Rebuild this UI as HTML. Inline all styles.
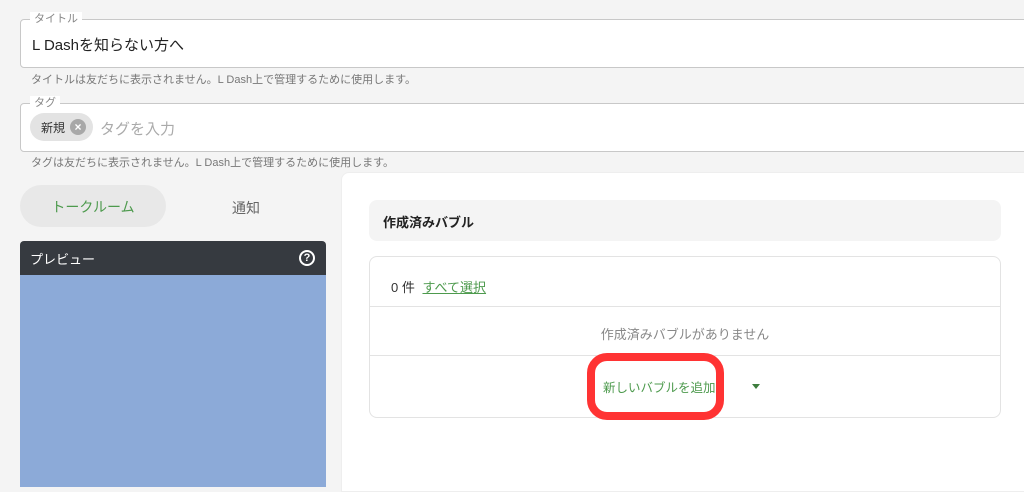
<!DOCTYPE html>
<html><head><meta charset="utf-8"><style>
*{box-sizing:border-box;margin:0;padding:0}
body{width:1024px;height:487px;background:#f4f4f4;font-family:"Liberation Sans","Noto Sans CJK JP",sans-serif;position:relative;overflow:hidden;color:#333}
.abs{position:absolute}
.field{position:absolute;left:20px;width:1020px;background:#fff;border:1px solid #c8c8c8;border-radius:4px}
.lab{position:absolute;left:9px;top:-8px;background:#fff;padding:0 4px;font-size:11px;color:#888;line-height:14px}
.help{position:absolute;left:31px;font-size:11px;color:#777}
</style></head><body>
<div class="field" style="top:19px;height:49px">
 <div class="lab">タイトル</div>
 <div class="abs" style="left:11px;top:14px;font-size:15px;color:#222">L Dashを知らない方へ</div>
</div>
<div class="help" style="top:71px">タイトルは友だちに表示されません。L Dash上で管理するために使用します。</div>
<div class="field" style="top:103px;height:49px">
 <div class="lab">タグ</div>
 <div class="abs" style="left:9px;top:9px;width:63px;height:28px;background:#e3e3e3;border-radius:14px">
  <span class="abs" style="left:11px;top:6px;font-size:12px;color:#333">新規</span>
  <span class="abs" style="left:40px;top:6px;width:16px;height:16px;border-radius:50%;background:#a8a8a8;color:#fff;font-size:12px;line-height:16px;text-align:center;font-weight:bold">×</span>
 </div>
 <div class="abs" style="left:79px;top:14px;font-size:15px;color:#aaa">タグを入力</div>
</div>
<div class="help" style="top:154px">タグは友だちに表示されません。L Dash上で管理するために使用します。</div>

<div class="abs" style="left:20px;top:185px;width:146px;height:42px;background:#e8e8e8;border-radius:21px;text-align:center;line-height:44px;font-size:14px;color:#4d9a4d">トークルーム</div>
<div class="abs" style="left:232px;top:198px;font-size:14px;color:#666">通知</div>

<div class="abs" style="left:20px;top:241px;width:306px;height:34px;background:#363a40;border-radius:4px 4px 0 0">
 <span class="abs" style="left:10px;top:8px;font-size:13px;color:#fff">プレビュー</span>
 <span class="abs" style="left:279px;top:9px;width:16px;height:16px;border:2px solid #fff;border-radius:50%;color:#fff;font-size:11px;font-weight:bold;line-height:12px;text-align:center">?</span>
</div>
<div class="abs" style="left:20px;top:275px;width:306px;height:212px;background:#8caad8"></div>

<div class="abs" style="left:341px;top:172px;width:700px;height:320px;background:#fff;border-radius:8px 0 0 0;border:1px solid #eee"></div>
<div class="abs" style="left:369px;top:200px;width:632px;height:41px;background:#f4f4f4;border-radius:8px">
 <span class="abs" style="left:14px;top:12px;font-size:13px;font-weight:bold;color:#222">作成済みバブル</span>
</div>
<div class="abs" style="left:369px;top:256px;width:632px;height:162px;border:1px solid #e3e3e3;border-radius:8px;background:#fff">
 <div class="abs" style="left:21px;top:20px;font-size:13px;color:#333">0 件 <span style="color:#4d9a4d;text-decoration:underline;margin-left:4px">すべて選択</span></div>
 <div class="abs" style="left:0;top:49px;width:630px;border-top:1px solid #e3e3e3"></div>
 <div class="abs" style="left:0;top:67px;width:630px;text-align:center;font-size:13px;color:#888">作成済みバブルがありません</div>
 <div class="abs" style="left:0;top:98px;width:630px;border-top:1px solid #e3e3e3"></div>
 <div class="abs" style="left:233px;top:120px;font-size:12.5px;color:#4d9a4d">新しいバブルを追加</div>
 <div class="abs" style="left:382px;top:127px;width:0;height:0;border-left:4px solid transparent;border-right:4px solid transparent;border-top:5px solid #3d7d3d"></div>
</div>
<div class="abs" style="left:587px;top:353px;width:137px;height:67px;border:8px solid #f33;border-radius:20px"></div>
</body></html>
